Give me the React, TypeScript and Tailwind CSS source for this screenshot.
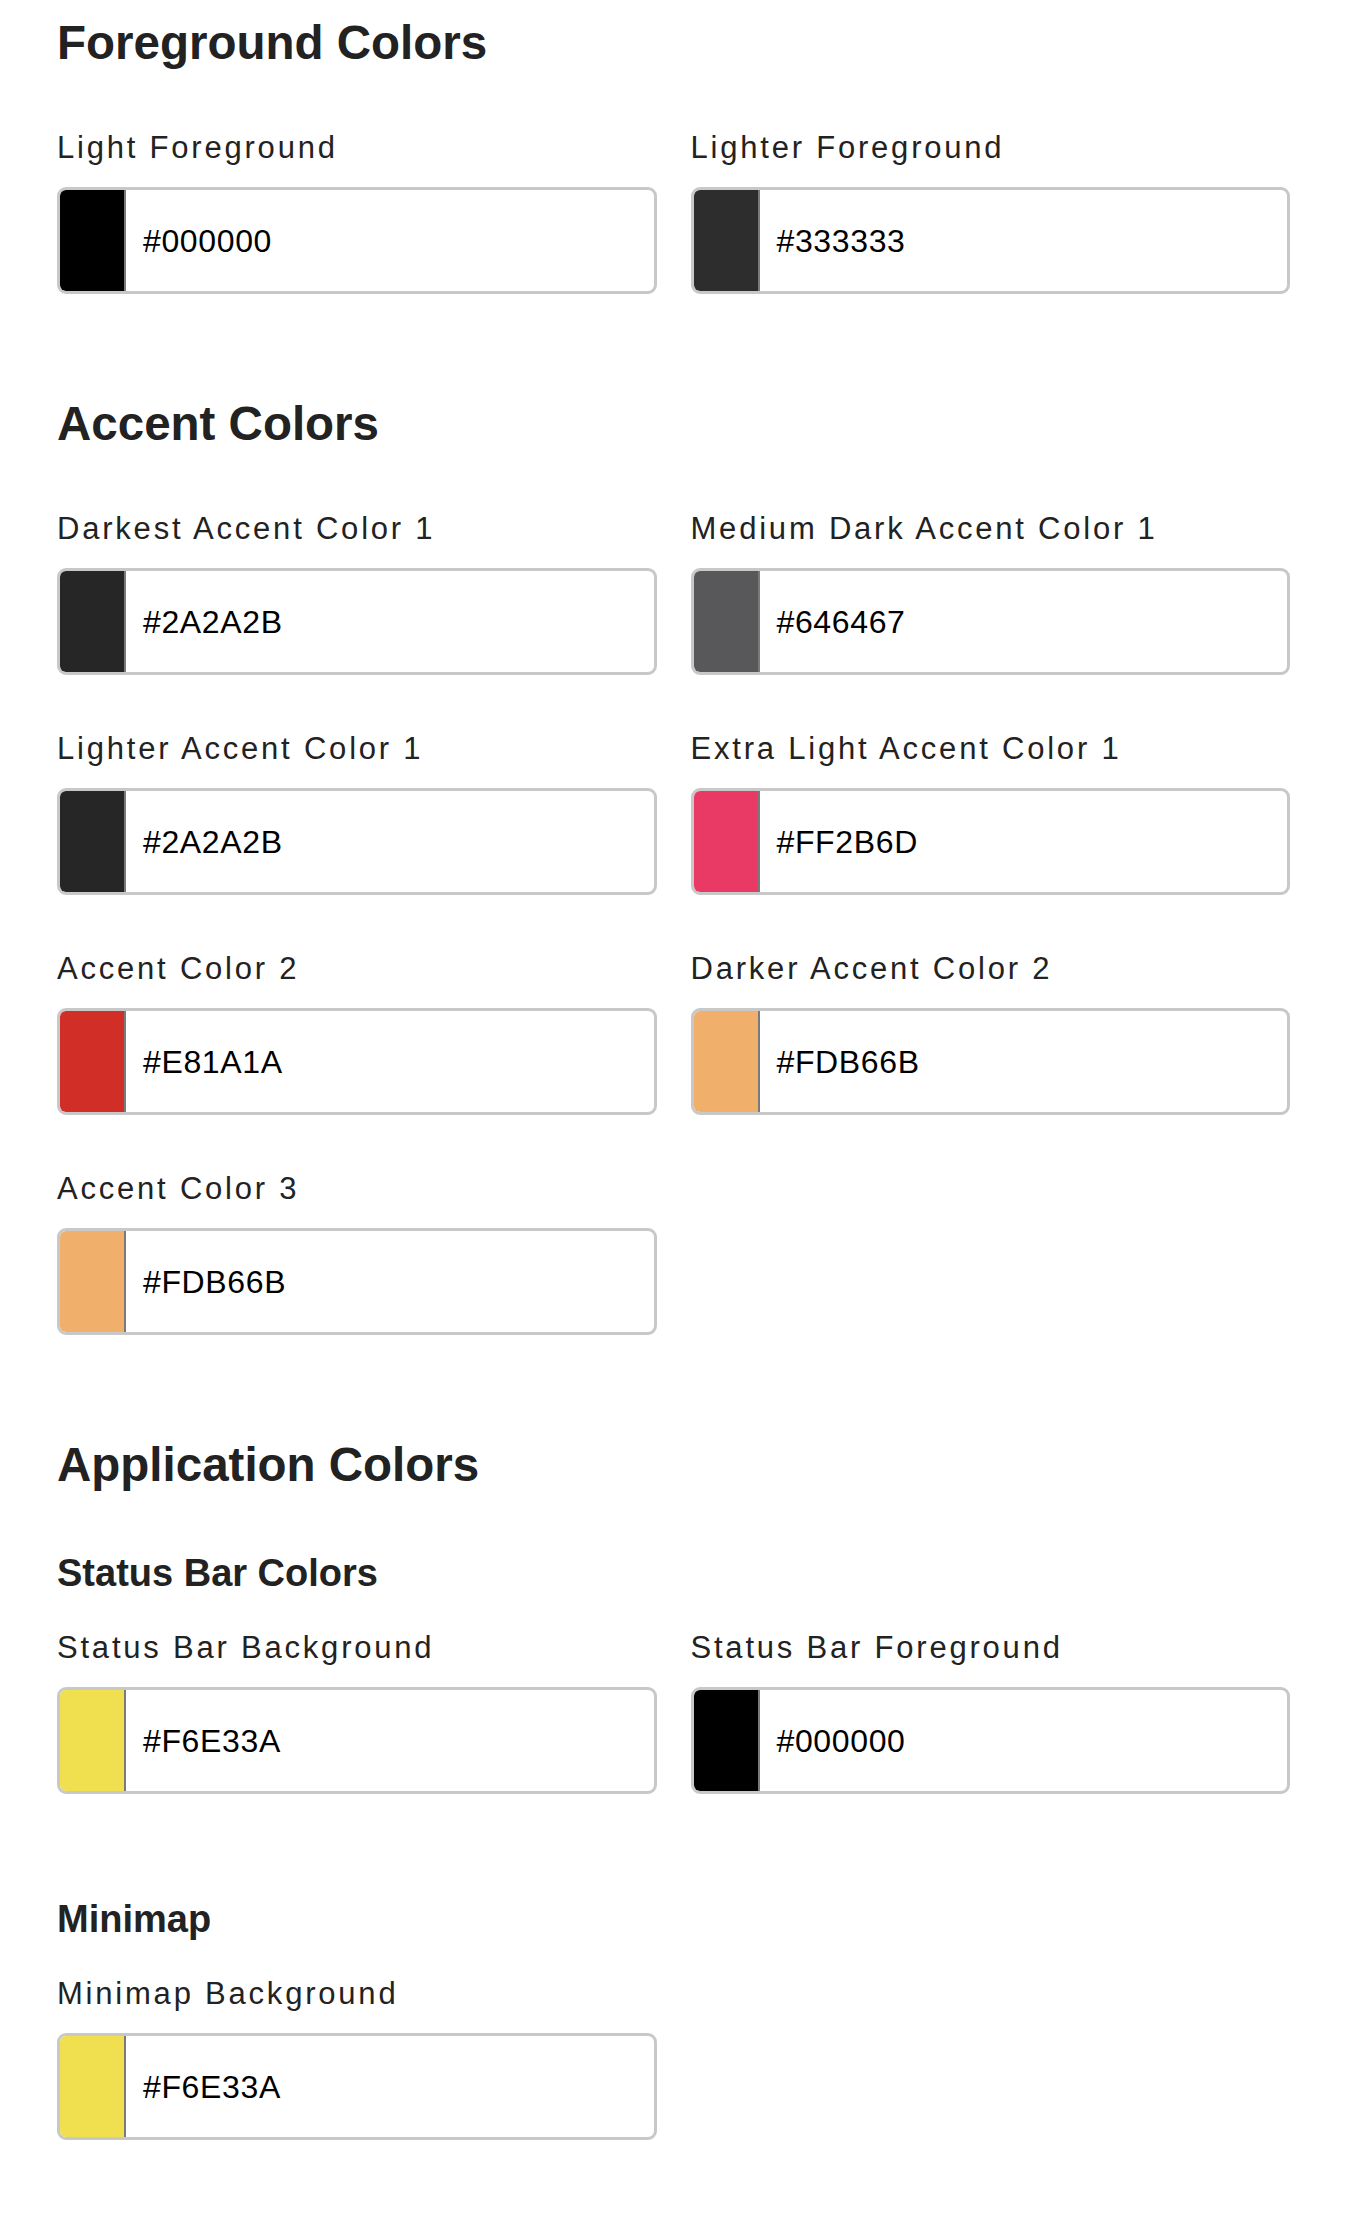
const FONT = { fontFamily: '"Liberation Sans", Arial, sans-serif' };

type Field = { label: string; hex: string; swatch: string };

const FOREGROUND: Field[] = [
  { label: 'Light Foreground', hex: '#000000', swatch: 'bg-[#000000]' },
  { label: 'Lighter Foreground', hex: '#333333', swatch: 'bg-[#2d2d2d]' },
];

const ACCENT: Field[] = [
  { label: 'Darkest Accent Color 1', hex: '#2A2A2B', swatch: 'bg-[#262627]' },
  { label: 'Medium Dark Accent Color 1', hex: '#646467', swatch: 'bg-[#58585b]' },
  { label: 'Lighter Accent Color 1', hex: '#2A2A2B', swatch: 'bg-[#262627]' },
  { label: 'Extra Light Accent Color 1', hex: '#FF2B6D', swatch: 'bg-[#e83a64]' },
  { label: 'Accent Color 2', hex: '#E81A1A', swatch: 'bg-[#d12e28]' },
  { label: 'Darker Accent Color 2', hex: '#FDB66B', swatch: 'bg-[#f0b06b]' },
  { label: 'Accent Color 3', hex: '#FDB66B', swatch: 'bg-[#f0b06b]' },
];

const STATUS_BAR: Field[] = [
  { label: 'Status Bar Background', hex: '#F6E33A', swatch: 'bg-[#f0e050]' },
  { label: 'Status Bar Foreground', hex: '#000000', swatch: 'bg-[#000000]' },
];

const MINIMAP: Field[] = [
  { label: 'Minimap Background', hex: '#F6E33A', swatch: 'bg-[#f0e050]' },
];

function ColorField({ field }: { field: Field }) {
  return (
    <div className="flex flex-col">
      <label className="text-[31px] leading-[36px] tracking-[0.09em] text-[#222] mb-[21px]">{field.label}</label>
      <div className="flex h-[107px] rounded-[9px] border-[3px] border-[#c8c8c8] bg-white overflow-hidden">
        <div className={`w-[66px] flex-none rounded-l-[5px] border-r-2 border-[#7a7a7a] ${field.swatch}`}></div>
        <div className="flex items-center pl-[17px] text-[32px] font-medium tracking-[0.02em] text-black">{field.hex}</div>
      </div>
    </div>
  );
}

function FieldGrid({ fields }: { fields: Field[] }) {
  return (
    <div className="grid grid-cols-2 gap-x-[34px] gap-y-[56px]">
      {fields.map((f, i) => (
        <ColorField key={i} field={f} />
      ))}
    </div>
  );
}

export default function App() {
  return (
    <div className="min-h-[2226px] bg-white pl-[57px] pr-[81px] pt-[15px] pb-[87px]" style={FONT}>
      {/* Foreground */}
      <section>
        <h2 className="text-[47.5px] leading-[56px] font-bold text-[#222] mb-[59px]">Foreground Colors</h2>
        <FieldGrid fields={FOREGROUND} />
      </section>

      {/* Accent */}
      <section className="mt-[102px]">
        <h2 className="text-[47.5px] leading-[56px] font-bold text-[#222] mb-[59px]">Accent Colors</h2>
        <FieldGrid fields={ACCENT} />
      </section>

      {/* Application */}
      <section className="mt-[102px]">
        <h2 className="text-[47.5px] leading-[56px] font-bold text-[#222] mb-[57px]">Application Colors</h2>
        <h3 className="text-[38px] leading-[46px] font-bold text-[#222] mb-[34px]">Status Bar Colors</h3>
        <FieldGrid fields={STATUS_BAR} />
        <h3 className="text-[38px] leading-[46px] font-bold text-[#222] mt-[102px] mb-[34px]">Minimap</h3>
        <FieldGrid fields={MINIMAP} />
      </section>
    </div>
  );
}
